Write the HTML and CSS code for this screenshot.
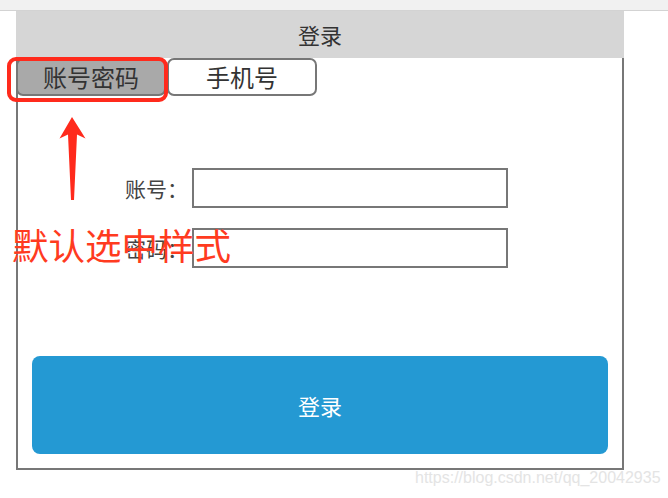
FILE: index.html
```html
<!DOCTYPE html>
<html lang="zh">
<head>
<meta charset="utf-8">
<title>登录</title>
<link rel="stylesheet" href="styles.css">
</head>
<body>
<div class="topbar"></div>
<div class="panel">
  <div class="header">登录</div>
  <div class="body">
    <div class="tabs">
      <div class="tab active">账号密码</div>
      <div class="tab">手机号</div>
    </div>
    <div class="form">
      <div class="row"><label class="label">账号<span class="colon">：</span></label><input class="input" type="text"></div>
      <div class="row"><label class="label">密码<span class="colon">：</span></label><input class="input" type="password"></div>
    </div>
    <button class="submit">登录</button>
  </div>
</div>
<div class="highlight"></div>
<svg class="arrow" width="30" height="90" viewBox="58 115 30 90">
  <polygon points="72,117 85.5,138.5 77,134.5 74,200 71,200 68,134.5 59.5,138.5" fill="#ff2a1c"/>
</svg>
<div class="note">默认选中样式</div>
<div class="watermark">https://blog.csdn.net/qq_20042935</div>
</body>
</html>
```
FILE: styles.css
```css
* { box-sizing: border-box; }
html, body { margin: 0; padding: 0; background: #fff; }
body {
  font-family: "Noto Sans CJK SC", "Noto Sans", sans-serif;
  color: #333;
  position: relative;
  width: 668px;
  height: 498px;
  overflow: hidden;
}
.topbar {
  height: 11px;
  background: #f1f1f1;
  border-bottom: 1px solid #d3d3d3;
}
.panel {
  margin-left: 16px;
  width: 608px;
}
.header {
  height: 47px;
  background: #d6d6d6;
  font-size: 22px;
  line-height: 46px;
  text-align: center;
  color: #333;
}
.body {
  height: 412px;
  border: 2px solid #777;
  border-top: none;
  display: flex;
  flex-direction: column;
}
.tabs {
  display: flex;
  gap: 1px;
  margin-left: -2px;
}
.tab {
  width: 150px;
  height: 38px;
  border: 2px solid #777;
  border-radius: 7px;
  background: #fff;
  font-size: 24px;
  line-height: 33px;
  text-align: center;
  color: #333;
}
.tab.active { background: #a9a9a9; }
.form {
  margin-top: 72px;
  display: flex;
  flex-direction: column;
  gap: 20px;
}
.row {
  display: flex;
  align-items: center;
  margin-left: 100px;
}
.label {
  width: 70px;
  text-align: right;
  font-size: 21px;
  color: #444;
  margin-right: 4px;
}
.colon { font-family: "Noto Sans CJK TC", sans-serif; }
.input {
  width: 316px;
  height: 40px;
  border: 2px solid #777;
  border-radius: 0;
  background: #fff;
  outline: none;
  margin: 0;
  padding: 0;
}
.submit {
  margin: 88px 0 0 14px;
  width: 576px;
  height: 98px;
  border: none;
  border-radius: 8px;
  background: #2499d3;
  color: #fff;
  font-family: "Noto Sans CJK SC", "Noto Sans", sans-serif;
  font-size: 22px;
  padding: 0;
}
.highlight {
  position: absolute;
  left: 7px;
  top: 57px;
  width: 161px;
  height: 45px;
  border: 4px solid #ff2a1c;
  border-radius: 9px;
}
.arrow {
  position: absolute;
  left: 58px;
  top: 115px;
}
.note {
  position: absolute;
  left: 12px;
  top: 224px;
  font-size: 36.5px;
  line-height: 42px;
  color: #ff3b1f;
  white-space: nowrap;
}
.watermark {
  position: absolute;
  left: 415px;
  top: 469px;
  font-family: "Liberation Sans", Arial, sans-serif;
  font-size: 16px;
  color: #e4e4e4;
  white-space: nowrap;
}
```
